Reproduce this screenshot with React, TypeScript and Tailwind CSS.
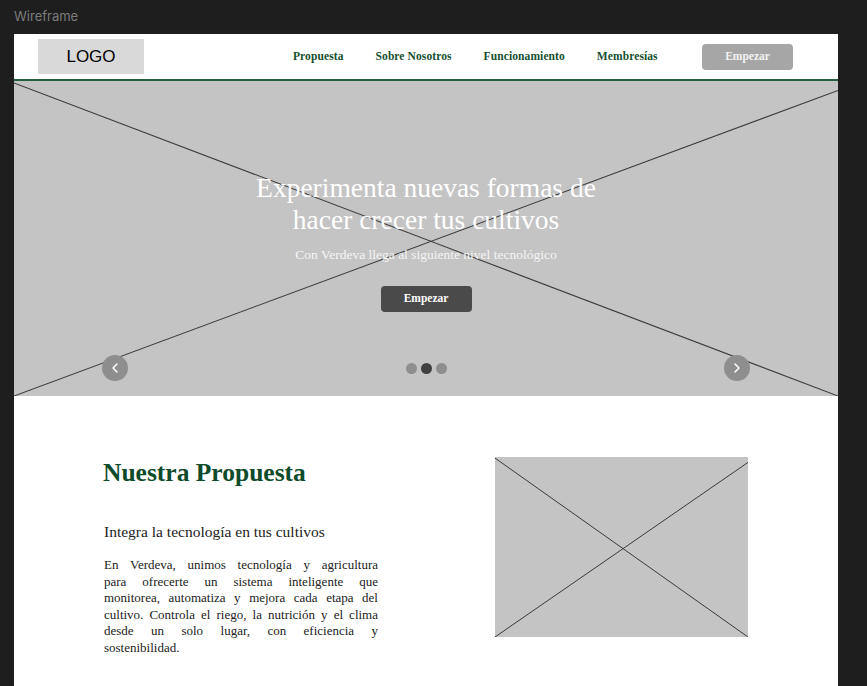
import { ChevronLeft, ChevronRight } from "lucide-react";

const serif = "font-['Liberation_Serif','DejaVu_Serif',serif]";

function Placeholder() {
  return (
    <svg className="absolute inset-0 h-full w-full" viewBox="0 0 100 100" preserveAspectRatio="none">
      <line x1="0" y1="0.6" x2="100" y2="100" stroke="#3a3a3a" strokeWidth="1" vectorEffect="non-scaling-stroke" />
      <line x1="100" y1="3" x2="0" y2="100" stroke="#3a3a3a" strokeWidth="1" vectorEffect="non-scaling-stroke" />
    </svg>
  );
}

const propuesta = [
  "En Verdeva, unimos tecnología y agricultura",
  "para ofrecerte un sistema inteligente que",
  "monitorea, automatiza y mejora cada etapa del",
  "cultivo. Controla el riego, la nutrición y el clima",
  "desde un solo lugar, con eficiencia y",
];

export default function App() {
  const links = ["Propuesta", "Sobre Nosotros", "Funcionamiento", "Membresías"];

  return (
    <div className="min-h-screen bg-[#1e1e1e] overflow-hidden">
      {/* Canvas label */}
      <div className="h-[34px] pl-[14px] pt-[7px] text-[13px] leading-[18px] text-[#7c7c7c] font-['Inter','Liberation_Sans',sans-serif]">
        Wireframe
      </div>

      <div className="ml-[14px] w-[824px] bg-white h-[652px]">
        {/* Header */}
        <header className="flex h-[47px] items-center border-b-2 border-[#265e42]">
          <div className="ml-[24px] flex h-[35px] w-[106px] items-center justify-center bg-[#d9d9d9] text-[17px] text-black font-['Liberation_Sans',sans-serif]">
            LOGO
          </div>
          <nav className={`ml-[149px] flex gap-[32px] text-[11.5px] font-bold text-[#14502f] ${serif}`}>
            {links.map((l) => (
              <a key={l} href="#" className="tracking-[0.1px]">
                {l}
              </a>
            ))}
          </nav>
          <button
            className={`ml-auto mr-[45px] mt-[1px] h-[26px] w-[91px] rounded-[4px] bg-[#a6a6a6] text-[11.5px] font-bold text-[#f2f2f2] ${serif}`}
          >
            Empezar
          </button>
        </header>

        {/* Hero */}
        <section className="relative h-[315px] bg-[#c4c4c4]">
          <Placeholder />
          <div className="relative flex flex-col items-center pt-[91px]">
            <h1 className={`text-center text-[27.5px] leading-[32px] text-white ${serif}`}>
              Experimenta nuevas formas de
              <br />
              hacer crecer tus cultivos
            </h1>
            <p className={`mt-[11px] text-[13.5px] leading-[16px] text-[#f4f4f4] ${serif}`}>
              Con Verdeva llega al siguiente nivel tecnológico
            </p>
            <button
              className={`mt-[23px] h-[26px] w-[91px] rounded-[4px] bg-[#4a4a4a] text-[11.5px] font-bold text-white ${serif}`}
            >
              Empezar
            </button>
            <div className="mt-[43px] flex w-full items-center justify-between px-[88px]">
              <span className="flex h-[26px] w-[26px] items-center justify-center rounded-full bg-[#8e8e8e] text-white">
                <ChevronLeft size={16} strokeWidth={2.2} />
              </span>
              <div className="flex gap-[4px]">
                <span className="h-[11px] w-[11px] rounded-full bg-[#8e8e8e]" />
                <span className="h-[11px] w-[11px] rounded-full bg-[#404040]" />
                <span className="h-[11px] w-[11px] rounded-full bg-[#8e8e8e]" />
              </div>
              <span className="flex h-[26px] w-[26px] items-center justify-center rounded-full bg-[#8e8e8e] text-white">
                <ChevronRight size={16} strokeWidth={2.2} />
              </span>
            </div>
          </div>
        </section>

        {/* Nuestra Propuesta */}
        <section className="flex pt-[61px]">
          <div className={`ml-[89px] w-[276px] ${serif}`}>
            <h2 className="mt-[1px] text-[25.5px] font-bold leading-[30px] text-[#0d4b2a]">Nuestra Propuesta</h2>
            <h3 className="ml-[1px] mt-[34px] text-[15.5px] leading-[20px] text-[#222]">
              Integra la tecnología en tus cultivos
            </h3>
            <div className="ml-[1px] mt-[15px] w-[274px] text-[13px] leading-[16.6px] text-[#222]">
              {propuesta.map((line) => (
                <p key={line} className="text-justify [text-align-last:justify]">
                  {line}
                </p>
              ))}
              <p>sostenibilidad.</p>
            </div>
          </div>
          <div className="relative ml-[116px] h-[180px] w-[253px] bg-[#c4c4c4]">
            <Placeholder />
          </div>
        </section>
      </div>
    </div>
  );
}
